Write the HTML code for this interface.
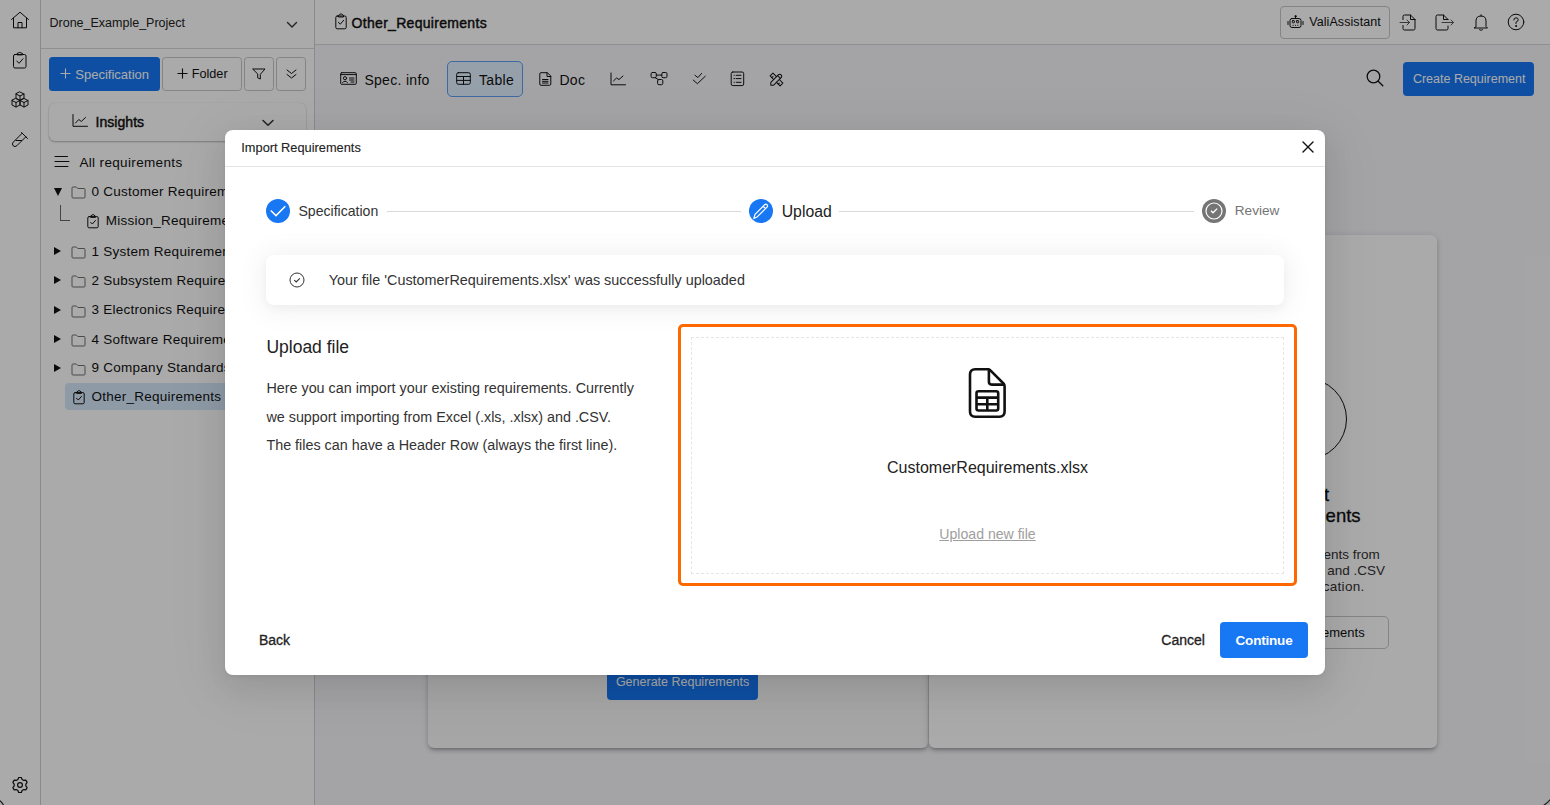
<!DOCTYPE html>
<html><head><meta charset="utf-8">
<style>
*{box-sizing:border-box;margin:0;padding:0}
html,body{width:1550px;height:805px;overflow:hidden;font-family:"Liberation Sans",sans-serif;color:#111;background:#fff;position:relative}
.a{position:absolute}
svg.a{display:block;overflow:visible}
.t{position:absolute;white-space:nowrap;line-height:1}
</style></head><body>
<div class="a" style="left:0px;top:0px;width:40px;height:805px;background:#fff"></div>
<div class="a" style="left:40px;top:0px;width:1px;height:805px;background:#cfcfcf"></div>
<div class="a" style="left:41px;top:0px;width:273px;height:805px;background:#fff"></div>
<div class="a" style="left:314px;top:0px;width:1px;height:805px;background:#cfcfcf"></div>
<div class="a" style="left:315px;top:0px;width:1235px;height:805px;background:#f7f7fa"></div>
<svg class="a" style="left:10px;top:11px" width="20" height="18" viewBox="0 0 20 18" fill="none" stroke="#111" stroke-width="1" stroke-linecap="round" stroke-linejoin="round"><path d="M1.5 8.5 L10 1.2 L18.5 8.5"/><path d="M3.5 7 V16.8 H16.5 V7"/><path d="M8 16.8 V11.5 H12 V16.8"/></svg>
<svg class="a" style="left:12px;top:51px" width="16" height="18" viewBox="0 0 16 18" fill="none" stroke="#111" stroke-width="1" stroke-linecap="round" stroke-linejoin="round"><rect x="1.5" y="3.5" width="12.5" height="13.5" rx="1.5"/><path d="M5 3.5 V2.5 Q7.75 0.3 10.5 2.5 V3.5 Z"/><path d="M4.8 10 L7 12.3 L11 7.8"/></svg>
<svg class="a" style="left:10px;top:91px" width="20" height="18" viewBox="0 0 20 18" fill="none" stroke="#111" stroke-width="1" stroke-linecap="round" stroke-linejoin="round"><path d="M10 1 L14 3 V7.5 L10 9.5 L6 7.5 V3 Z M6 3 L10 5 L14 3 M10 5 V9.5"/><path d="M6 7.5 L10 9.5 V14 L6 16 L2 14 V9.5 Z M2 9.5 L6 11.5 L10 9.5 M6 11.5 V16"/><path d="M14 7.5 L18 9.5 V14 L14 16 L10 14 V9.5 Z M10 9.5 L14 11.5 L18 9.5 M14 11.5 V16"/></svg>
<svg class="a" style="left:11px;top:131px" width="18" height="18" viewBox="0 0 18 18" fill="none" stroke="#111" stroke-width="1" stroke-linecap="round" stroke-linejoin="round"><path d="M10.5 1.5 L16.5 7.5"/><path d="M14.8 5.8 L6 14.6 Q4 16.6 2.2 14.8 Q0.4 13 2.4 11 L11.2 2.2"/><path d="M5 9.5 H10.5"/></svg>
<svg class="a" style="left:11px;top:775.8px" width="18" height="18" viewBox="0 0 18 18" fill="none" stroke="#111" stroke-width="1.2" stroke-linejoin="round"><path d="M6.89 3.49 L7.68 1.52 L10.32 1.52 L11.11 3.49 L12.71 4.41 L14.82 4.11 L16.14 6.40 L14.83 8.08 L14.83 9.92 L16.14 11.60 L14.82 13.89 L12.71 13.59 L11.11 14.51 L10.32 16.48 L7.68 16.48 L6.89 14.51 L5.29 13.59 L3.18 13.89 L1.86 11.60 L3.17 9.92 L3.17 8.08 L1.86 6.40 L3.18 4.11 L5.29 4.41 Z"/><circle cx="9" cy="9" r="2.4"/></svg>
<svg class="a" style="left:-6px;top:795px" width="14" height="14" viewBox="0 0 14 14" fill="none" stroke="#222" stroke-width="1.2"><path d="M1 3 Q7 5 9.5 10"/></svg>
<svg class="a" style="left:1540px;top:795px" width="14" height="14" viewBox="0 0 14 14" fill="none" stroke="#333" stroke-width="1.2"><path d="M12.5 1.5 Q9 7 3.5 10.5"/></svg>
<div class="t" style="left:49.50px;top:17.32px;font-size:12.5px;color:#222">Drone_Example_Project</div>
<svg class="a" style="left:286px;top:21px" width="12" height="8" viewBox="0 0 12 8" fill="none" stroke="#333" stroke-width="1.4" stroke-linecap="round" stroke-linejoin="round"><path d="M1.5 1.5 L6 6 L10.5 1.5"/></svg>
<div class="a" style="left:41px;top:48px;width:273px;height:1px;background:#d9d9d9"></div>
<div class="a" style="left:49px;top:57px;width:111px;height:34px;background:#1677f5;border-radius:3.5px"></div>
<svg class="a" style="left:60px;top:68px" width="11" height="11" viewBox="0 0 11 11" fill="none" stroke="#fff" stroke-width="1.1"><path d="M5.5 0.5 V10.5 M0.5 5.5 H10.5"/></svg>
<div class="t" style="left:75.30px;top:67.90px;font-size:13px;color:#fff">Specification</div>
<div class="a" style="left:162px;top:57px;width:79.5px;height:34px;border:1px solid #c6c6c6;border-radius:3.5px;background:#fff"></div>
<svg class="a" style="left:176.5px;top:68px" width="11" height="11" viewBox="0 0 11 11" fill="none" stroke="#111" stroke-width="1.1"><path d="M5.5 0.5 V10.5 M0.5 5.5 H10.5"/></svg>
<div class="t" style="left:191.70px;top:68.15px;font-size:12.7px;color:#111">Folder</div>
<div class="a" style="left:244px;top:57px;width:30px;height:34px;border:1px solid #c6c6c6;border-radius:3.5px;background:#fff"></div>
<svg class="a" style="left:252px;top:67.5px" width="14" height="12" viewBox="0 0 14 12" fill="none" stroke="#111" stroke-width="1" stroke-linecap="round" stroke-linejoin="round"><path d="M1 1 H13 L8.3 6.3 V11 L5.7 9.8 V6.3 Z"/></svg>
<div class="a" style="left:276px;top:57px;width:30px;height:34px;border:1px solid #c6c6c6;border-radius:3.5px;background:#fff"></div>
<svg class="a" style="left:285.5px;top:69px" width="11" height="10" viewBox="0 0 11 10" fill="none" stroke="#111" stroke-width="1" stroke-linecap="round" stroke-linejoin="round"><path d="M1 1 L5.5 4.5 L10 1 M1 5.5 L5.5 9 L10 5.5"/></svg>
<div class="a" style="left:49px;top:103px;width:257px;height:38px;background:#fff;border-radius:6px;box-shadow:0 1px 2px rgba(0,0,0,.28),0 0 1px rgba(0,0,0,.12)"></div>
<svg class="a" style="left:72px;top:114px" width="16" height="13" viewBox="0 0 16 13" fill="none" stroke="#111" stroke-width="1" stroke-linecap="round" stroke-linejoin="round"><path d="M1 0.5 V12.3 H15.5"/><path d="M3.5 9 L6.8 5.5 L9.3 7.5 L13.5 3.5"/></svg>
<div class="t" style="left:95.50px;top:114.85px;font-size:14px;color:#111;letter-spacing:0.05px;-webkit-text-stroke:0.45px #111">Insights</div>
<svg class="a" style="left:262px;top:119px" width="12" height="8" viewBox="0 0 12 8" fill="none" stroke="#333" stroke-width="1.5" stroke-linecap="round" stroke-linejoin="round"><path d="M1 1.5 L6 6.3 L11 1.5"/></svg>
<svg class="a" style="left:54px;top:155px" width="16" height="12" viewBox="0 0 16 12" fill="none" stroke="#111" stroke-width="1" stroke-linecap="round" stroke-linejoin="round"><path d="M1 1.5 H13.5 M1 6.5 H15 M1 11.5 H14"/></svg>
<div class="t" style="left:79.40px;top:155.67px;font-size:13.5px;color:#111;letter-spacing:0.35px">All requirements</div>
<div class="a" style="left:53.5px;top:187.5px;width:0px;height:0px;border-left:4.3px solid transparent;border-right:4.3px solid transparent;border-top:8px solid #111"></div>
<svg class="a" style="left:70.5px;top:185.5px" width="15" height="13" viewBox="0 0 15 13" fill="none" stroke="#707070" stroke-width="1" stroke-linejoin="round"><path d="M1 2 Q1 1 2 1 H5.3 L6.8 2.5 H13 Q14 2.5 14 3.5 V11 Q14 12 13 12 H2 Q1 12 1 11 Z"/></svg>
<div class="t" style="left:91.60px;top:184.97px;font-size:13.5px;color:#111;letter-spacing:0.25px">0 Customer Requirements</div>
<div class="a" style="left:60px;top:205px;width:10px;height:16px;border-left:1px solid #666;border-bottom:1px solid #666"></div>
<svg class="a" style="left:86.5px;top:213.5px" width="12" height="15" viewBox="0 0 12 15" fill="none" stroke="#111" stroke-width="1" stroke-linecap="round" stroke-linejoin="round"><rect x="0.8" y="2.6" width="10.4" height="11.2" rx="1.3"/><path d="M3.6 3 V2 L6 0.5 L8.4 2 V3 Z"/><path d="M3.6 8.3 L5.3 10 L8.4 6.5"/></svg>
<div class="t" style="left:105.80px;top:214.07px;font-size:13.5px;color:#111;letter-spacing:0.25px">Mission_Requirements</div>
<div class="a" style="left:54px;top:247px;width:0px;height:0px;border-top:4px solid transparent;border-bottom:4px solid transparent;border-left:7.3px solid #111"></div>
<svg class="a" style="left:70.5px;top:245.5px" width="15" height="13" viewBox="0 0 15 13" fill="none" stroke="#707070" stroke-width="1" stroke-linejoin="round"><path d="M1 2 Q1 1 2 1 H5.3 L6.8 2.5 H13 Q14 2.5 14 3.5 V11 Q14 12 13 12 H2 Q1 12 1 11 Z"/></svg>
<div class="t" style="left:91.60px;top:245.27px;font-size:13.5px;color:#111;letter-spacing:0.25px">1 System Requirements</div>
<div class="a" style="left:54px;top:276px;width:0px;height:0px;border-top:4px solid transparent;border-bottom:4px solid transparent;border-left:7.3px solid #111"></div>
<svg class="a" style="left:70.5px;top:274.5px" width="15" height="13" viewBox="0 0 15 13" fill="none" stroke="#707070" stroke-width="1" stroke-linejoin="round"><path d="M1 2 Q1 1 2 1 H5.3 L6.8 2.5 H13 Q14 2.5 14 3.5 V11 Q14 12 13 12 H2 Q1 12 1 11 Z"/></svg>
<div class="t" style="left:91.60px;top:274.37px;font-size:13.5px;color:#111;letter-spacing:0.25px">2 Subsystem Requirements</div>
<div class="a" style="left:54px;top:306px;width:0px;height:0px;border-top:4px solid transparent;border-bottom:4px solid transparent;border-left:7.3px solid #111"></div>
<svg class="a" style="left:70.5px;top:304.5px" width="15" height="13" viewBox="0 0 15 13" fill="none" stroke="#707070" stroke-width="1" stroke-linejoin="round"><path d="M1 2 Q1 1 2 1 H5.3 L6.8 2.5 H13 Q14 2.5 14 3.5 V11 Q14 12 13 12 H2 Q1 12 1 11 Z"/></svg>
<div class="t" style="left:91.60px;top:303.47px;font-size:13.5px;color:#111;letter-spacing:0.25px">3 Electronics Requirements</div>
<div class="a" style="left:54px;top:335px;width:0px;height:0px;border-top:4px solid transparent;border-bottom:4px solid transparent;border-left:7.3px solid #111"></div>
<svg class="a" style="left:70.5px;top:333.5px" width="15" height="13" viewBox="0 0 15 13" fill="none" stroke="#707070" stroke-width="1" stroke-linejoin="round"><path d="M1 2 Q1 1 2 1 H5.3 L6.8 2.5 H13 Q14 2.5 14 3.5 V11 Q14 12 13 12 H2 Q1 12 1 11 Z"/></svg>
<div class="t" style="left:91.60px;top:332.57px;font-size:13.5px;color:#111;letter-spacing:0.25px">4 Software Requirements</div>
<div class="a" style="left:54px;top:364px;width:0px;height:0px;border-top:4px solid transparent;border-bottom:4px solid transparent;border-left:7.3px solid #111"></div>
<svg class="a" style="left:70.5px;top:362.5px" width="15" height="13" viewBox="0 0 15 13" fill="none" stroke="#707070" stroke-width="1" stroke-linejoin="round"><path d="M1 2 Q1 1 2 1 H5.3 L6.8 2.5 H13 Q14 2.5 14 3.5 V11 Q14 12 13 12 H2 Q1 12 1 11 Z"/></svg>
<div class="t" style="left:91.60px;top:361.47px;font-size:13.5px;color:#111;letter-spacing:0.25px">9 Company Standards</div>
<div class="a" style="left:65px;top:383px;width:245px;height:27px;background:#d6e9fb;border-radius:4px"></div>
<svg class="a" style="left:72.5px;top:389.5px" width="12" height="15" viewBox="0 0 12 15" fill="none" stroke="#111" stroke-width="1" stroke-linecap="round" stroke-linejoin="round"><rect x="0.8" y="2.6" width="10.4" height="11.2" rx="1.3"/><path d="M3.6 3 V2 L6 0.5 L8.4 2 V3 Z"/><path d="M3.6 8.3 L5.3 10 L8.4 6.5"/></svg>
<div class="t" style="left:91.50px;top:390.47px;font-size:13.5px;color:#111;letter-spacing:0.25px">Other_Requirements</div>
<div class="a" style="left:315px;top:0px;width:1235px;height:44px;background:#fff"></div>
<div class="a" style="left:315px;top:44px;width:1235px;height:1px;background:#d9d9d9"></div>
<svg class="a" style="left:335px;top:13.2px" width="12" height="16.5" viewBox="0 0 12 16.5" fill="none" stroke="#111" stroke-width="1" stroke-linecap="round" stroke-linejoin="round"><rect x="0.8" y="3" width="10.4" height="12.8" rx="1.4"/><path d="M3.5 3.6 V2.4 L6 0.7 L8.5 2.4 V3.6 Z"/><path d="M3.4 9.3 L5.3 11.2 L8.6 7.3"/></svg>
<div class="t" style="left:351.60px;top:15.75px;font-size:14px;color:#111;letter-spacing:0.3px;-webkit-text-stroke:0.45px #111">Other_Requirements</div>
<div class="a" style="left:1279.5px;top:5.5px;width:110px;height:33px;border:1px solid #c6c6c6;border-radius:4px;background:#fff"></div>
<svg class="a" style="left:1287px;top:15px" width="17" height="14" viewBox="0 0 17 14" fill="none" stroke="#111" stroke-width="1" stroke-linecap="round" stroke-linejoin="round"><rect x="3" y="3.5" width="11" height="9" rx="2"/><path d="M8.5 3.5 V1.5"/><circle cx="8.5" cy="1.2" r=".7"/><path d="M1 6.5 V9.5 M16 6.5 V9.5"/><rect x="5.3" y="5.6" width="2.2" height="2.2" rx=".6"/><rect x="9.5" y="5.6" width="2.2" height="2.2" rx=".6"/><path d="M6 10.3 H6.3 M8.35 10.3 H8.65 M10.7 10.3 H11"/></svg>
<div class="t" style="left:1309.20px;top:15.62px;font-size:12.5px;color:#111;letter-spacing:0.08px">ValiAssistant</div>
<svg class="a" style="left:1399px;top:14px" width="18" height="17" viewBox="0 0 18 17" fill="none" stroke="#111" stroke-width="1" stroke-linecap="round" stroke-linejoin="round"><path d="M4 5.5 V2.5 Q4 1 5.5 1 H11.5 L16 5.5 V14.5 Q16 16 14.5 16 H5.5 Q4 16 4 14.5 V11.5"/><path d="M11.5 1 V5.5 H16"/><path d="M1 8.5 H10.5 M8 6 L10.5 8.5 L8 11" stroke="#555"/></svg>
<svg class="a" style="left:1435px;top:14px" width="20" height="17" viewBox="0 0 20 17" fill="none" stroke="#111" stroke-width="1" stroke-linecap="round" stroke-linejoin="round"><path d="M13 5.5 L8.5 1 H2.5 Q1 1 1 2.5 V14.5 Q1 16 2.5 16 H11.5 Q13 16 13 14.5 V12"/><path d="M8.5 1 V5.5 H13"/><path d="M7 8.5 H18.5 M16 6 L18.5 8.5 L16 11" stroke="#555"/></svg>
<svg class="a" style="left:1473px;top:14px" width="16" height="17" viewBox="0 0 16 17" fill="none" stroke="#111" stroke-width="1" stroke-linecap="round" stroke-linejoin="round"><path d="M3 12.5 V7 Q3 2 8 2 Q13 2 13 7 V12.5 L14.5 14 H1.5 Z"/><path d="M8 0.8 V2"/><path d="M6.5 15.8 Q8 17 9.5 15.8"/></svg>
<svg class="a" style="left:1507px;top:13px" width="18" height="18" viewBox="0 0 18 18" fill="none" stroke="#111" stroke-width="1" stroke-linecap="round" stroke-linejoin="round"><circle cx="9" cy="9" r="7.8"/><path d="M6.8 7 Q6.8 4.8 9 4.8 Q11.2 4.8 11.2 6.8 Q11.2 8.3 9 9.2 V10.5"/><circle cx="9" cy="13" r=".5" fill="#111"/></svg>
<svg class="a" style="left:340px;top:72px" width="17" height="13" viewBox="0 0 17 13" fill="none" stroke="#111" stroke-width="1" stroke-linecap="round" stroke-linejoin="round"><rect x="0.7" y="0.7" width="15.6" height="11.6" rx="1"/><path d="M0.7 2.6 H16.3"/><circle cx="5" cy="6.2" r="1.6"/><path d="M2.5 10.6 Q5 7.6 7.5 10.6"/><path d="M9.5 6 H14 M9.5 8 H14 M11 10 H14"/></svg>
<div class="t" style="left:364.40px;top:72.85px;font-size:14px;color:#111;letter-spacing:0.3px">Spec. info</div>
<div class="a" style="left:447px;top:61px;width:76px;height:36px;background:#e0f0ff;border:1px solid #5e9ff2;border-radius:5px"></div>
<svg class="a" style="left:456px;top:72px" width="15" height="13" viewBox="0 0 15 13" fill="none" stroke="#111" stroke-width="1" stroke-linecap="round" stroke-linejoin="round"><rect x="0.7" y="0.7" width="13.6" height="11.6" rx="1.6"/><path d="M0.7 4.5 H14.3 M0.7 8.4 H14.3 M7.5 4.5 V12.3"/></svg>
<div class="t" style="left:479.00px;top:72.85px;font-size:14px;color:#111;letter-spacing:0.3px">Table</div>
<svg class="a" style="left:539px;top:72px" width="13" height="14" viewBox="0 0 13 14" fill="none" stroke="#111" stroke-width="1" stroke-linecap="round" stroke-linejoin="round"><path d="M8 0.7 H2 Q0.8 0.7 0.8 2 V12 Q0.8 13.3 2 13.3 H10.5 Q11.8 13.3 11.8 12 V4.5 Z"/><path d="M8 0.7 V4.5 H11.8"/><path d="M3.5 7.5 H9 M3.5 9.3 H9 M3.5 11 H9"/></svg>
<div class="t" style="left:559.40px;top:72.85px;font-size:14px;color:#111;letter-spacing:0.3px">Doc</div>
<svg class="a" style="left:610px;top:72px" width="16" height="14" viewBox="0 0 16 14" fill="none" stroke="#111" stroke-width="1" stroke-linecap="round" stroke-linejoin="round"><path d="M1 1 V12.8 H15.5"/><path d="M3.5 9 L6.5 6 L9 7.5 L13 4"/></svg>
<svg class="a" style="left:650px;top:72px" width="18" height="14" viewBox="0 0 18 14" fill="none" stroke="#111" stroke-width="1" stroke-linecap="round" stroke-linejoin="round"><rect x="1.1" y="0.5" width="5.2" height="5.2" rx="1.3"/><rect x="11.8" y="0.5" width="5.2" height="5.2" rx="1.3"/><rect x="7.6" y="7.5" width="5.2" height="5.2" rx="1.3"/><path d="M6.3 3.1 H11.8 M5.2 5.7 L8.2 7.5"/></svg>
<svg class="a" style="left:690px;top:70px" width="18" height="16" viewBox="0 0 18 16" fill="none" stroke="#111" stroke-width="1" stroke-linecap="round" stroke-linejoin="round"><path d="M3.2 10 L7.4 13.7 L15.3 6.2"/><path d="M5 5.3 L7.9 7.6 L11.6 3.4"/></svg>
<svg class="a" style="left:730px;top:71px" width="15" height="16" viewBox="0 0 15 16" fill="none" stroke="#111" stroke-width="1" stroke-linecap="round" stroke-linejoin="round"><rect x="1.2" y="1" width="12.5" height="13.6" rx="1.6"/><path d="M6.2 4.3 H11 M6.2 7.6 H11 M6.2 11.3 H11"/><path d="M4 4.3 H4.4 M3.7 7.6 L4.2 8 L4.8 7.2 M4 11.3 H4.4" stroke-width="0.9"/></svg>
<svg class="a" style="left:768px;top:70.5px" width="17" height="17" viewBox="0 0 24 24" fill="none" stroke="#111" stroke-width="1.45" stroke-linecap="round" stroke-linejoin="round"><path d="M4 20h4l10.5 -10.5a2.828 2.828 0 1 0 -4 -4l-10.5 10.5v4"/><path d="M13.5 6.5l4 4"/><path d="M12 8l-5 -5l-4 4l5 5"/><path d="M7 8l-1.5 1.5"/><path d="M16 12l5 5l-4 4l-5 -5"/><path d="M16 17l-1.5 1.5"/></svg>
<svg class="a" style="left:1366px;top:69px" width="18" height="18" viewBox="0 0 18 18" fill="none" stroke="#111" stroke-width="1.3" stroke-linecap="round"><circle cx="7.5" cy="7.5" r="6.3"/><path d="M12.2 12.2 L16.8 16.8"/></svg>
<div class="a" style="left:1403px;top:62px;width:131px;height:34px;background:#1677f5;border-radius:4px"></div>
<div class="t" style="left:1412.90px;top:72.52px;font-size:12.5px;color:#fff">Create Requirement</div>
<div class="a" style="left:428px;top:200px;width:500px;height:548px;background:#f9f9fb;border-radius:6px;box-shadow:0 3px 3px -2px rgba(0,0,0,.2),0 3px 4px rgba(0,0,0,.14),0 1px 8px rgba(0,0,0,.12)"></div>
<div class="a" style="left:607px;top:667px;width:151px;height:33px;background:#1677f5;border-radius:4px"></div>
<div class="t" style="left:615.90px;top:676.32px;font-size:12.5px;color:#fff">Generate Requirements</div>
<div class="a" style="left:929px;top:235px;width:508px;height:513px;background:#fff;border-radius:6px;box-shadow:0 3px 3px -2px rgba(0,0,0,.2),0 3px 4px rgba(0,0,0,.14),0 1px 8px rgba(0,0,0,.12)"></div>
<div class="a" style="left:1265px;top:377.5px;width:82px;height:82px;border:1.3px solid #111;border-radius:50%"></div>
<div class="t" style="left:1153.00px;top:486.34px;font-size:18.5px;color:#111;width:300px;text-align:center;-webkit-text-stroke:0.3px #111">Import</div>
<div class="t" style="left:1153.00px;top:507.34px;font-size:18.5px;color:#111;width:300px;text-align:center;-webkit-text-stroke:0.3px #111">Requirements</div>
<div class="t" style="left:1154.00px;top:548.27px;font-size:13.5px;color:#333;width:300px;text-align:center">Import requirements from</div>
<div class="t" style="left:1154.00px;top:564.37px;font-size:13.5px;color:#333;width:300px;text-align:center">Excel (.xls, .xlsx) and .CSV</div>
<div class="t" style="left:1154.00px;top:579.77px;font-size:13.5px;color:#333;letter-spacing:0.3px;width:300px;text-align:center">into a specification.</div>
<div class="a" style="left:1220px;top:615.5px;width:168.5px;height:33px;border:1px solid #c6c6c6;border-radius:5px;background:#fff"></div>
<div class="t" style="left:1154.00px;top:625.50px;font-size:13px;color:#111;width:300px;text-align:center">Import Requirements</div>
<div class="a" style="left:0px;top:0px;width:1550px;height:805px;background:rgba(0,0,0,0.333)"></div>
<div class="a" style="left:225px;top:130px;width:1100px;height:545px;background:#fff;border-radius:8px;box-shadow:0 2px 4px rgba(0,0,0,.06),0 12px 30px 4px rgba(0,0,0,.07),0 9px 60px 10px rgba(0,0,0,.05)"></div>
<div class="t" style="left:241.30px;top:141.96px;font-size:12.8px;color:#222;-webkit-text-stroke:0.12px #222">Import Requirements</div>
<svg class="a" style="left:1302px;top:141px" width="12" height="12" viewBox="0 0 12 12" fill="none" stroke="#111" stroke-width="1.4" stroke-linecap="round"><path d="M1 1 L11 11 M11 1 L1 11"/></svg>
<div class="a" style="left:225px;top:166px;width:1100px;height:1px;background:#e3e3e3"></div>
<svg class="a" style="left:266px;top:199px" width="24" height="24" viewBox="0 0 24 24" ><circle cx="12" cy="12" r="12" fill="#1877f2"/><path d="M4.8 11.5 L10 16.6 L19.3 7.3" fill="none" stroke="#fff" stroke-width="1.5"/></svg>
<div class="t" style="left:298.40px;top:204.06px;font-size:14.1px;color:#333">Specification</div>
<div class="a" style="left:387px;top:211px;width:354px;height:1px;background:#d9d9d9"></div>
<svg class="a" style="left:749px;top:199px" width="24" height="24" viewBox="0 0 24 24" ><circle cx="12" cy="12" r="12" fill="#1877f2"/><path d="M4.8 19.5 L6 15.3 L15.6 5.7 Q16.8 4.6 18 5.7 Q19.1 6.9 18 8.1 L8.4 17.7 Z M14.1 7.2 L16.5 9.6" fill="none" stroke="#fff" stroke-width="1.2" stroke-linejoin="round"/></svg>
<div class="t" style="left:781.70px;top:203.93px;font-size:15.8px;color:#222">Upload</div>
<div class="a" style="left:839px;top:211px;width:355px;height:1px;background:#d9d9d9"></div>
<svg class="a" style="left:1202px;top:199px" width="24" height="24" viewBox="0 0 24 24" ><circle cx="12" cy="12" r="12" fill="#757575"/><circle cx="12" cy="12" r="8" fill="none" stroke="#fff" stroke-width="1.2"/><path d="M9 11.8 L11 13.8 L15.2 9.6" fill="none" stroke="#fff" stroke-width="1.3"/></svg>
<div class="t" style="left:1234.80px;top:204.29px;font-size:13.6px;color:#757575">Review</div>
<div class="a" style="left:266px;top:255px;width:1018px;height:50px;background:#fff;border-radius:8px;box-shadow:0 2px 26px 6px rgba(0,0,0,.05),0 4px 10px rgba(0,0,0,.03)"></div>
<svg class="a" style="left:289px;top:272px" width="16" height="16" viewBox="0 0 16 16" fill="none" stroke="#333" stroke-width="1"><circle cx="8" cy="8" r="7"/><path d="M5.3 8.2 L7.2 10 L10.8 6.3" stroke-width="1.1"/></svg>
<div class="t" style="left:328.80px;top:272.61px;font-size:14.4px;color:#333">Your file 'CustomerRequirements.xlsx' was successfully uploaded</div>
<div class="t" style="left:266.40px;top:339.19px;font-size:17.5px;color:#222">Upload file</div>
<div class="t" style="left:266.40px;top:380.85px;font-size:14.35px;color:#333">Here you can import your existing requirements. Currently</div>
<div class="t" style="left:266.40px;top:409.75px;font-size:14.35px;color:#333">we support importing from Excel (.xls, .xlsx) and .CSV.</div>
<div class="t" style="left:266.40px;top:438.45px;font-size:14.35px;color:#333">The files can have a Header Row (always the first line).</div>
<div class="a" style="left:678px;top:324px;width:619px;height:262px;border:3px solid #fd6800;border-radius:5px"></div>
<div class="a" style="left:691px;top:337px;width:593px;height:237px;border:1px dashed #e6e6e6"></div>
<svg class="a" style="left:960px;top:360px" width="60" height="65" viewBox="0 0 60 65" fill="none" stroke="#111" stroke-width="2.6" stroke-linejoin="round"><path d="M28.9 9.3 H15.2 Q10 9.3 10 14.5 V51.5 Q10 56.7 15.2 56.7 H39.4 Q44.6 56.7 44.6 51.5 V26.2 Q44.6 24.6 43.5 23.5 L30.4 10.4 Q29.4 9.3 28.9 9.3 Z"/><path d="M28.9 9.3 V21.8 Q28.9 24.6 31.7 24.6 H44.6"/><rect x="16.5" y="31.2" width="21.7" height="19.3" rx="2"/><path d="M16.5 37.6 H38.2 M16.5 44.3 H38.2 M27.3 37.6 V50.5"/></svg>
<div class="t" style="left:787.00px;top:459.66px;font-size:16px;color:#222;width:401px;text-align:center">CustomerRequirements.xlsx</div>
<div class="t" style="left:787.00px;top:527.16px;font-size:14.1px;color:#9e9e9e;width:401px;text-align:center;text-decoration:underline">Upload new file</div>
<div class="t" style="left:258.90px;top:633.15px;font-size:14px;color:#222;-webkit-text-stroke:0.3px #222">Back</div>
<div class="t" style="left:1161.30px;top:633.15px;font-size:14px;color:#222;-webkit-text-stroke:0.3px #222">Cancel</div>
<div class="a" style="left:1220px;top:622px;width:88px;height:36px;background:#1877f2;border-radius:4px"></div>
<div class="t" style="left:1220.00px;top:633.77px;font-size:13.5px;color:#fff;font-weight:bold;letter-spacing:-0.2px;width:88px;text-align:center">Continue</div>
</body></html>
